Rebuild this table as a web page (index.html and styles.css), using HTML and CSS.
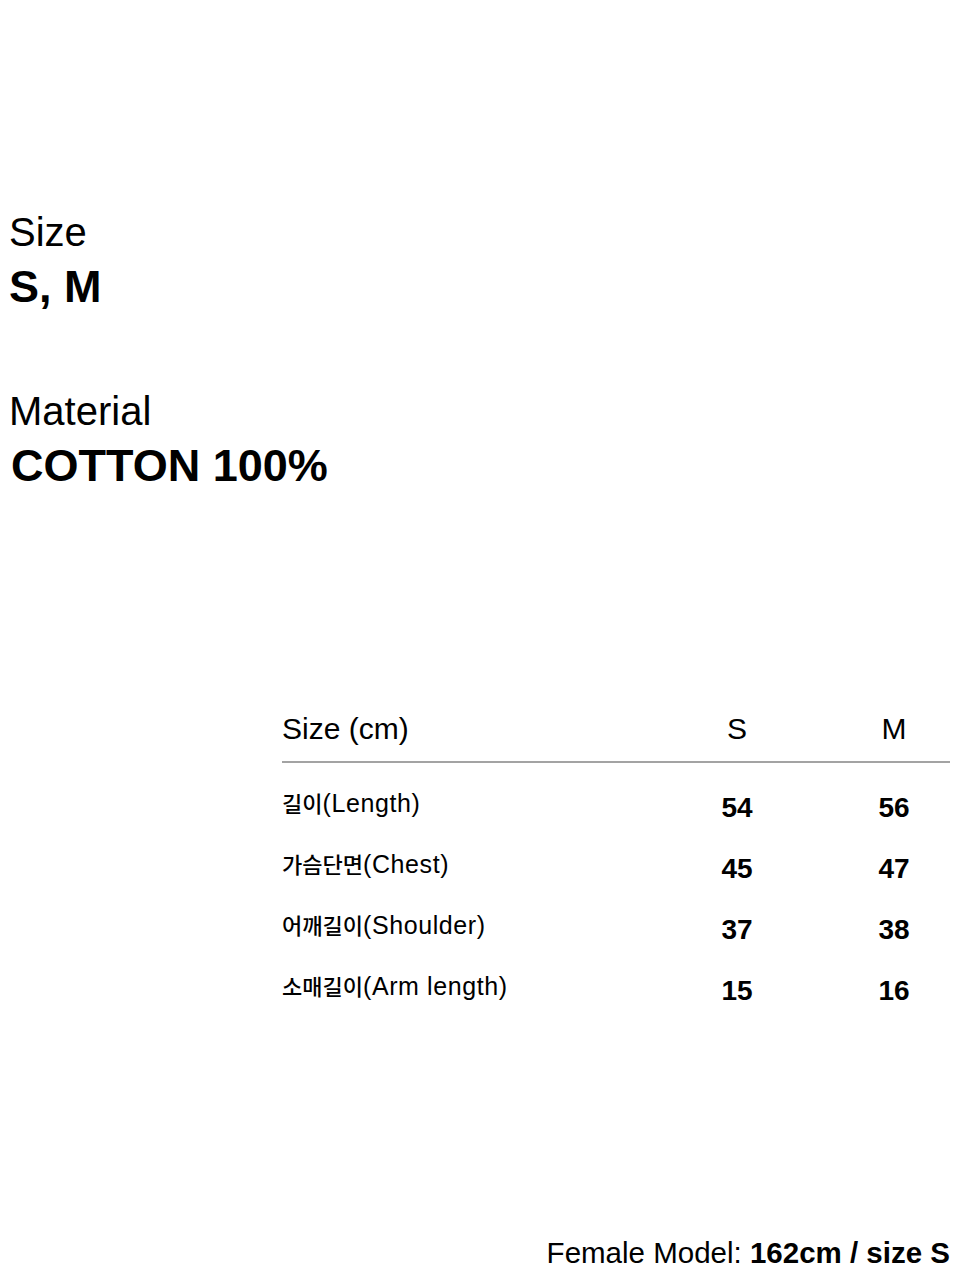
FILE: index.html
```html
<!DOCTYPE html>
<html lang="ko">
<head>
<meta charset="utf-8">
<title>Size Info</title>
<link rel="stylesheet" href="styles.css">
</head>
<body>
<main class="page">
  <section class="specs">
    <div class="spec">
      <div class="spec-label">Size</div>
      <div class="spec-value">S, M</div>
    </div>
    <div class="spec">
      <div class="spec-label">Material</div>
      <div class="spec-value spec-value--indent">COTTON 100%</div>
    </div>
  </section>

  <section class="size-table">
    <div class="st-head">
      <div class="st-title">Size (cm)</div>
      <div class="st-col">S</div>
      <div class="st-col">M</div>
    </div>
    <div class="st-row">
      <div class="st-label"><span class="ko">길이</span>(Length)</div>
      <div class="st-val">54</div>
      <div class="st-val">56</div>
    </div>
    <div class="st-row">
      <div class="st-label"><span class="ko">가슴단면</span>(Chest)</div>
      <div class="st-val">45</div>
      <div class="st-val">47</div>
    </div>
    <div class="st-row">
      <div class="st-label"><span class="ko">어깨길이</span>(Shoulder)</div>
      <div class="st-val">37</div>
      <div class="st-val">38</div>
    </div>
    <div class="st-row">
      <div class="st-label"><span class="ko">소매길이</span>(Arm length)</div>
      <div class="st-val">15</div>
      <div class="st-val">16</div>
    </div>
  </section>

  <footer class="model">Female Model: <strong>162cm / size S</strong></footer>
</main>
</body>
</html>
```

FILE: styles.css
```css
html, body {
  margin: 0;
  padding: 0;
  background: #ffffff;
}

body {
  font-family: "Liberation Sans", Arial, "Noto Sans CJK KR", sans-serif;
  color: #000000;
}

.page {
  width: 960px;
  height: 1280px;
  box-sizing: border-box;
  overflow: hidden;
}

/* top spec block */
.specs {
  padding: 208px 0 0 9px;
  display: flex;
  flex-direction: column;
  gap: 74px;
}

.spec-label {
  font-size: 40px;
  line-height: 48px;
  font-weight: 400;
}

.spec-value {
  margin-top: 5px;
  font-size: 45px;
  line-height: 52px;
  font-weight: 700;
}

.spec-value--indent {
  padding-left: 2px;
}

/* size table */
.size-table {
  margin: 219px 10px 0 282px;
  display: flex;
  flex-direction: column;
  gap: 21px;
}

.st-head,
.st-row {
  display: grid;
  grid-template-columns: 1fr 112px 112px;
  column-gap: 45px;
  align-items: start;
}

.st-head {
  font-size: 30px;
  line-height: 36px;
  padding-bottom: 14px;
  border-bottom: 2px solid #a3a3a3;
  margin-bottom: 4px;
}

.st-col {
  text-align: center;
}

.st-label {
  font-size: 25px;
  line-height: 30px;
  letter-spacing: 0.6px;
  white-space: nowrap;
}

.ko {
  font-family: "Noto Sans CJK KR", sans-serif;
  font-size: 22px;
  font-weight: 500;
  letter-spacing: 0;
  line-height: 1;
}

.st-val {
  font-size: 28px;
  line-height: 40px;
  font-weight: 700;
  text-align: center;
}

/* footer */
.model {
  margin-top: 225px;
  padding-right: 10px;
  text-align: right;
  font-size: 29.5px;
  line-height: 34px;
}

.model strong {
  font-weight: 700;
}
```
